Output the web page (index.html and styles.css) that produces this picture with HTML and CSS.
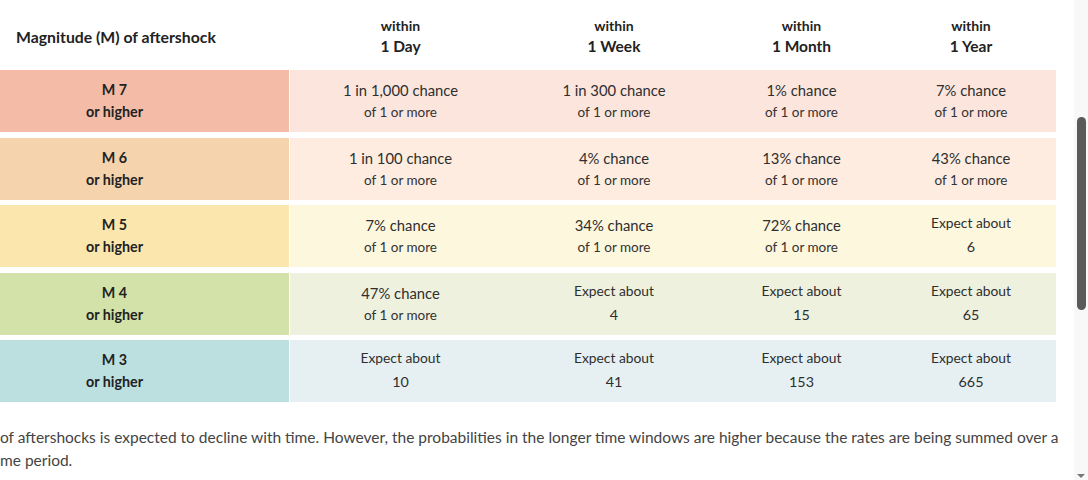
FILE: index.html
```html
<!DOCTYPE html>
<html lang="en">
<head>
<meta charset="utf-8">
<title>Aftershock forecast</title>
<link rel="stylesheet" href="styles.css">
</head>
<body>
<div class="viewport">
  <main class="content">
    <div class="forecast">
      <div class="hcell hlabel">Magnitude (M) of aftershock</div>
      <div class="hcell"><span class="w">within</span><span class="p">1 Day</span></div>
      <div class="hcell"><span class="w">within</span><span class="p">1 Week</span></div>
      <div class="hcell"><span class="w">within</span><span class="p">1 Month</span></div>
      <div class="hcell"><span class="w">within</span><span class="p">1 Year</span></div>

      <div class="mag m7"><span>M 7</span><span>or higher</span></div>
      <div class="cell d7"><span class="big">1 in 1,000 chance</span><span class="small">of 1 or more</span></div>
      <div class="cell d7"><span class="big">1 in 300 chance</span><span class="small">of 1 or more</span></div>
      <div class="cell d7"><span class="big">1% chance</span><span class="small">of 1 or more</span></div>
      <div class="cell d7"><span class="big">7% chance</span><span class="small">of 1 or more</span></div>

      <div class="mag m6"><span>M 6</span><span>or higher</span></div>
      <div class="cell d6"><span class="big">1 in 100 chance</span><span class="small">of 1 or more</span></div>
      <div class="cell d6"><span class="big">4% chance</span><span class="small">of 1 or more</span></div>
      <div class="cell d6"><span class="big">13% chance</span><span class="small">of 1 or more</span></div>
      <div class="cell d6"><span class="big">43% chance</span><span class="small">of 1 or more</span></div>

      <div class="mag m5"><span>M 5</span><span>or higher</span></div>
      <div class="cell d5"><span class="big">7% chance</span><span class="small">of 1 or more</span></div>
      <div class="cell d5"><span class="big">34% chance</span><span class="small">of 1 or more</span></div>
      <div class="cell d5"><span class="big">72% chance</span><span class="small">of 1 or more</span></div>
      <div class="cell d5"><span class="exp">Expect about</span><span class="num">6</span></div>

      <div class="mag m4"><span>M 4</span><span>or higher</span></div>
      <div class="cell d4"><span class="big">47% chance</span><span class="small">of 1 or more</span></div>
      <div class="cell d4"><span class="exp">Expect about</span><span class="num">4</span></div>
      <div class="cell d4"><span class="exp">Expect about</span><span class="num">15</span></div>
      <div class="cell d4"><span class="exp">Expect about</span><span class="num">65</span></div>

      <div class="mag m3"><span>M 3</span><span>or higher</span></div>
      <div class="cell d3"><span class="exp">Expect about</span><span class="num">10</span></div>
      <div class="cell d3"><span class="exp">Expect about</span><span class="num">41</span></div>
      <div class="cell d3"><span class="exp">Expect about</span><span class="num">153</span></div>
      <div class="cell d3"><span class="exp">Expect about</span><span class="num">665</span></div>
    </div>
    <p class="note">of aftershocks is expected to decline with time. However, the probabilities in the longer time windows are higher because the rates are being summed over a<br>me period.</p>
  </main>
  <div class="scrollbar">
    <div class="track"><div class="thumb"></div></div>
    <div class="arrow"></div>
  </div>
</div>
</body>
</html>
```

FILE: styles.css
```css
* { box-sizing: border-box; }
html, body { margin: 0; padding: 0; }
body {
  background: #fff;
  font-family: Lato, "Open Sans", sans-serif;
  color: #222;
  width: 1088px;
  height: 480px;
  overflow: hidden;
}
.viewport {
  display: flex;
  width: 1088px;
  height: 480px;
}
.content {
  flex: 1;
  padding-right: 16px;
}
.forecast {
  display: grid;
  grid-template-columns: 290px 221px 206px 169px 170px;
  grid-template-rows: 64.5px repeat(5, 62px);
  row-gap: 5.5px;
}
.hcell {
  display: flex;
  flex-direction: column;
  align-items: center;
  justify-content: center;
  font-weight: 700;
  color: #222;
  padding-top: 8px;
}
.hcell .w { font-size: 14px; line-height: 21px; }
.hcell .p { font-size: 15.5px; line-height: 21px; }
.hlabel {
  align-items: flex-start;
  padding-left: 16px;
  font-size: 15.8px;
}
.mag {
  display: flex;
  flex-direction: column;
  align-items: center;
  justify-content: center;
  font-weight: 700;
  font-size: 14.3px;
  line-height: 22px;
  color: #222;
  border-right: 1px solid #fff;
  padding-right: 60px;
}
.cell {
  display: flex;
  flex-direction: column;
  align-items: center;
  justify-content: center;
  color: #2e2e2e;
}
.big { font-size: 14.8px; line-height: 22px; }
.small { font-size: 13.5px; line-height: 22px; color: #333; }
.exp { font-size: 13.8px; line-height: 22px; }
.num { font-size: 14.3px; line-height: 26px; }

.m7 { background: #f4bca7; }
.d7 { background: #fbe5dd; }
.m6 { background: #f5d3ad; }
.d6 { background: #fdecdf; }
.m5 { background: #fbe7ae; }
.d5 { background: #fdf7de; }
.m4 { background: #d3e2a8; }
.d4 { background: #eef1dd; }
.m3 { background: #bcdfe0; }
.d3 { background: #e6f0f2; }

.note {
  margin: 24px 0 0 0;
  font-size: 15.5px;
  line-height: 23px;
  color: #444;
  white-space: nowrap;
}
.scrollbar {
  width: 16px;
  background: #f8f8f8;
  display: flex;
  flex-direction: column;
  align-items: center;
  padding: 117px 0 2px;
}
.track { flex: 1; display: flex; justify-content: center; }
.thumb {
  width: 9px;
  height: 193px;
  border-radius: 5px;
  background: #5a5a5a;
}
.arrow {
  width: 0;
  height: 0;
  border-left: 4px solid transparent;
  border-right: 4px solid transparent;
  border-top: 4px solid #777;
}
```
